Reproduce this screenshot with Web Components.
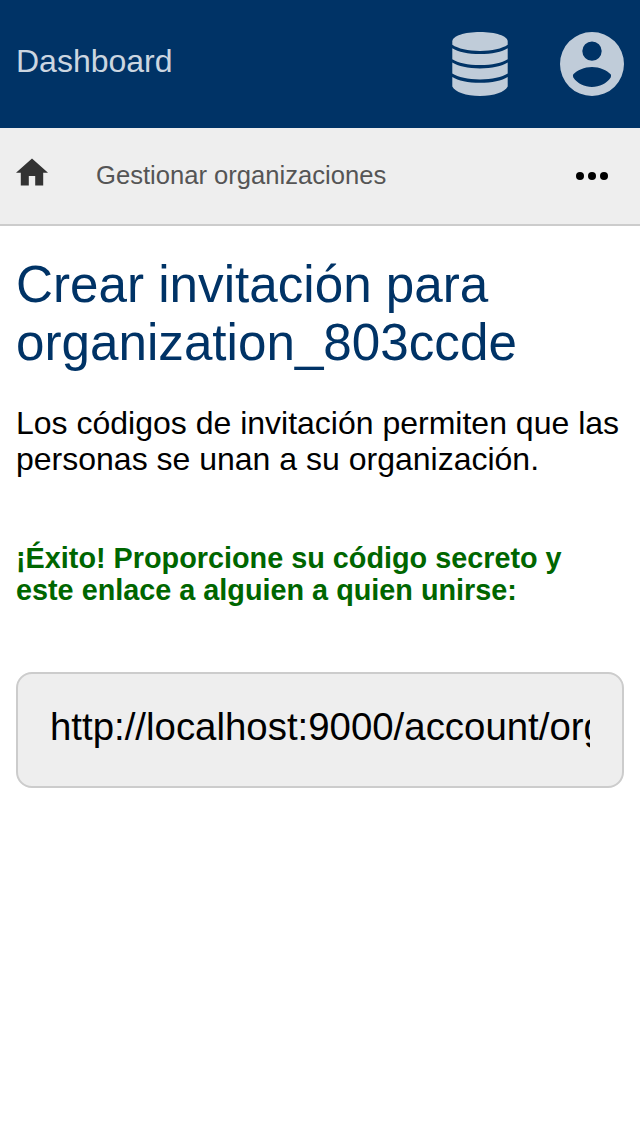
<!DOCTYPE html>
<html lang="es">
<head>
<meta charset="utf-8">
<title>Crear invitación</title>
<style>
body { margin: 0; background: #fff; color: #000; font-family: "Liberation Sans", Arial, sans-serif; }
</style>
</head>
<body>
<invite-page></invite-page>
<script>
function define(name, html) {
  customElements.define(name, class extends HTMLElement {
    constructor() {
      super();
      this.attachShadow({ mode: 'open' }).innerHTML = html;
    }
  });
}

define('app-header', `
<style>
:host { display: flex; box-sizing: border-box; height: 128px; padding: 32px 16px; background: #003366; color: #ccd6e0; }
.title { flex: 1; font-size: 32px; line-height: 36px; padding-top: 11px; }
.icons { display: flex; gap: 52px; }
svg { display: block; fill: #c0ccd9; }
</style>
<div class="title"><slot></slot></div>
<div class="icons">
  <svg width="56" height="64" viewBox="0 0 56 64">
    <path d="M.3 9.500C.3 4 12.500 0 28 0S55.700 4 55.700 9.500V12.800C50 16.700 40 19 28 19S6 16.700 .3 12.800Z"/>
    <path d="M.3 16.200C6 19.800 16 22.100 28 22.100S50 19.800 55.700 16.200V27.300C50 30.900 40 33.100 28 33.100S6 30.900 .3 27.300Z"/>
    <path d="M.3 30.600C6 34.200 16 36.400 28 36.400S50 34.200 55.700 30.600V41.600C50 45.200 40 47.400 28 47.400S6 45.200 .3 41.600Z"/>
    <path d="M.3 44.900C6 48.500 16 50.700 28 50.700S50 48.500 55.700 44.900V54.500C53 60 42 64 28 64S3 60 .3 54.500Z"/>
  </svg>
  <svg width="64" height="64" viewBox="0 0 64 64">
    <path fill-rule="evenodd" d="M32 0a32 32 0 1 1 0 64a32 32 0 1 1 0-64ZM32 9.400a9.700 9.700 0 1 0 0 19.400a9.700 9.700 0 1 0 0-19.400ZM32 35C24.500 35 16.800 38.500 13.300 42.300Q12.500 43.800 13.300 45.500C17.500 51.600 24.500 55 32 55S46.500 51.600 50.700 45.500Q51.500 43.800 50.700 42.300C47.200 38.500 39.500 35 32 35Z"/>
  </svg>
</div>`);

define('nav-bar', `
<style>
:host { display: flex; align-items: flex-start; box-sizing: border-box; height: 98px; padding: 0 32px 0 16px; background: #eee; border-bottom: 2px solid #ccc; color: #555; }
.home { width: 32px; height: 28px; margin: 30px 48px 0 0; fill: #333; }
.label { flex: 1; font-size: 25.6px; line-height: 30px; padding-top: 32px; }
.more { width: 32px; height: 8px; margin-top: 44px; fill: #000; }
</style>
<svg class="home" viewBox="0 0 32 28"><path transform="translate(-3.200 -4.400) scale(1.600)" d="M10 20v-6h4v6h5v-8h3L12 3 2 12h3v8z"/></svg>
<div class="label"><slot></slot></div>
<svg class="more" viewBox="0 0 32 8"><circle cx="4" cy="4" r="4"/><circle cx="16" cy="4" r="4"/><circle cx="28" cy="4" r="4"/></svg>`);

define('page-title', `
<style>
:host { display: block; color: #003366; font-size: 51.2px; line-height: 58px; }
</style><slot></slot>`);

define('status-message', `
<style>
:host { display: block; color: #006600; font-size: 28.8px; font-weight: bold; line-height: 32px; }
</style><slot></slot>`);

define('copy-field', `
<style>
:host { display: block; box-sizing: border-box; height: 116px; padding: 32px; background: #eee; border: 2px solid #ccc; border-radius: 16px; font-size: 38.4px; line-height: 42px; }
.value { overflow: hidden; white-space: nowrap; height: 48px; }
</style><div class="value"><slot></slot></div>`);

define('invite-page', `
<style>
:host { display: block; }
main { padding: 30px 16px; }
p { margin: 33px 0 65px; font-size: 32px; line-height: 36px; }
copy-field { margin-top: 66px; }
</style>
<app-header>Dashboard</app-header>
<nav-bar>Gestionar organizaciones</nav-bar>
<main>
  <page-title>Crear invitación para organization_803ccde</page-title>
  <p>Los códigos de invitación permiten que las personas se unan a su organización.</p>
  <status-message>¡Éxito! Proporcione su código secreto y este enlace a alguien a quien unirse:</status-message>
  <copy-field>http://localhost:9000/account/org</copy-field>
</main>`);
</script>
</body>
</html>
